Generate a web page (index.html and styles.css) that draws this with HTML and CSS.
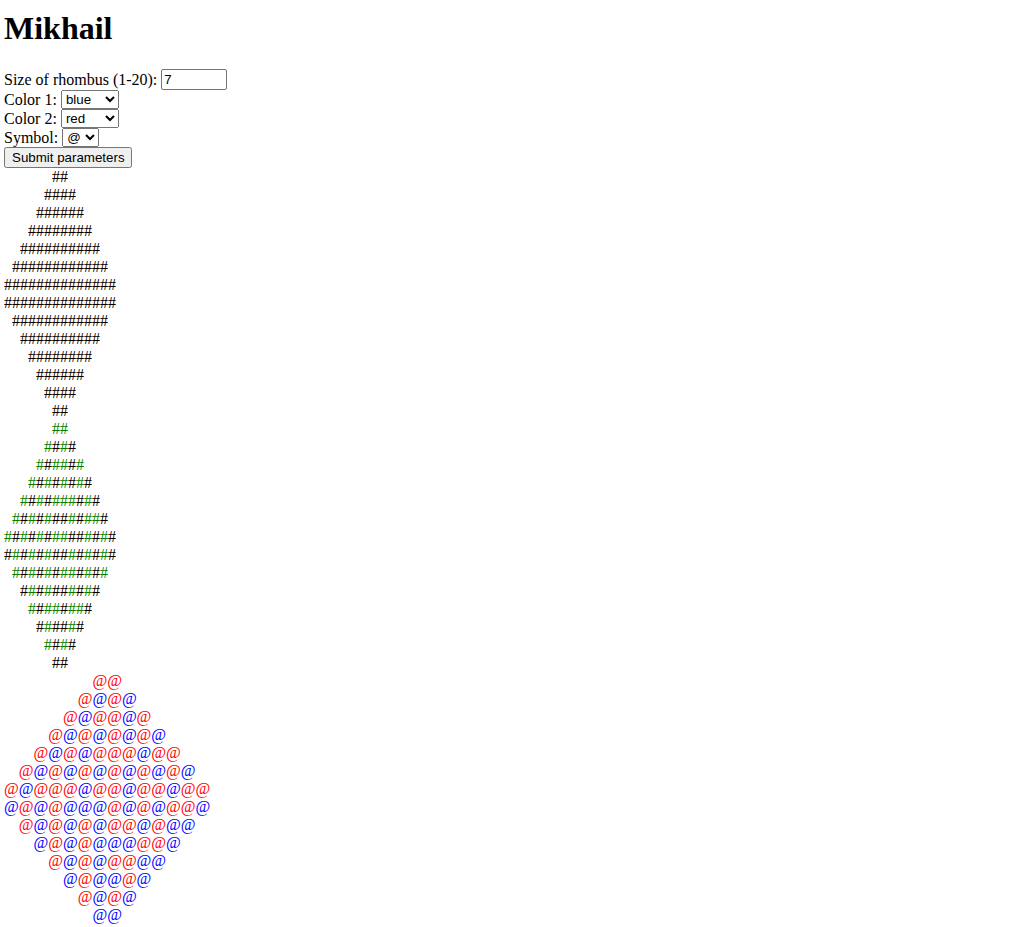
FILE: index.html
```html
<!DOCTYPE html>
<html lang="en">
<head>
<meta charset="utf-8">
<title>Mikhail</title>
<link rel="stylesheet" href="styles.css">
</head>
<body>
<h1 class="title">Mikhail</h1>
<form class="params">
  <div class="row row-tall">Size of rhombus (1-20):<input class="size" type="text" value="7"></div>
  <div class="row">Color 1:<select class="color"><option>blue</option><option>red</option><option>green</option><option>black</option></select></div>
  <div class="row">Color 2:<select class="color"><option>red</option><option>blue</option><option>green</option><option>black</option></select></div>
  <div class="row">Symbol:<select class="symbol"><option>@</option><option>#</option><option>*</option></select></div>
  <div class="row row-tall"><button class="submit" type="button">Submit parameters</button></div>
</form>

<div class="rhombus">
  <div class="line">##</div>
  <div class="line">####</div>
  <div class="line">######</div>
  <div class="line">########</div>
  <div class="line">##########</div>
  <div class="line">############</div>
  <div class="line">##############</div>
  <div class="line">##############</div>
  <div class="line">############</div>
  <div class="line">##########</div>
  <div class="line">########</div>
  <div class="line">######</div>
  <div class="line">####</div>
  <div class="line">##</div>
</div>

<div class="rhombus">
  <div class="line"><span class="g">##</span></div>
  <div class="line"><span class="g">#</span>#<span class="g">#</span>#</div>
  <div class="line"><span class="g">#</span>#<span class="g">##</span>#<span class="g">#</span></div>
  <div class="line"><span class="g">#</span>#<span class="g">#</span>#<span class="g">#</span>#<span class="g">#</span>#</div>
  <div class="line"><span class="g">#</span>#<span class="g">#</span>#<span class="g">###</span>#<span class="g">#</span>#</div>
  <div class="line"><span class="g">#</span>#<span class="g">#</span>#<span class="g">#</span>##<span class="g">#</span>#<span class="g">##</span>#</div>
  <div class="line"><span class="g">#</span>#<span class="g">#</span>#<span class="g">#</span>#<span class="g">##</span>##<span class="g">#</span>#<span class="g">#</span>#</div>
  <div class="line">#<span class="g">#</span>#<span class="g">#</span>#<span class="g">#</span>##<span class="g">#</span>#<span class="g">#</span>#<span class="g">#</span>#</div>
  <div class="line"><span class="g">#</span>#<span class="g">#</span>#<span class="g">#</span>#<span class="g">##</span>#<span class="g">#</span>#<span class="g">#</span></div>
  <div class="line">#<span class="g">#</span>#<span class="g">#</span>##<span class="g">#</span>#<span class="g">#</span>#</div>
  <div class="line"><span class="g">#</span>#<span class="g">##</span>#<span class="g">##</span>#</div>
  <div class="line">#<span class="g">#</span>##<span class="g">#</span>#</div>
  <div class="line"><span class="g">#</span>#<span class="g">#</span>#</div>
  <div class="line">##</div>
</div>

<div class="rhombus at">
  <div class="line">@@</div>
  <div class="line">@<span class="b">@</span>@<span class="b">@</span></div>
  <div class="line">@<span class="b">@</span>@@<span class="b">@</span>@</div>
  <div class="line">@<span class="b">@</span>@<span class="b">@</span>@<span class="b">@</span>@<span class="b">@</span></div>
  <div class="line">@<span class="b">@</span>@<span class="b">@</span>@@@<span class="b">@</span>@@</div>
  <div class="line">@<span class="b">@</span>@<span class="b">@</span>@<span class="b">@</span>@<span class="b">@</span>@<span class="b">@</span>@<span class="b">@</span></div>
  <div class="line">@<span class="b">@</span>@@@<span class="b">@</span>@@<span class="b">@</span>@@<span class="b">@</span>@@</div>
  <div class="line"><span class="b">@</span>@<span class="b">@</span>@<span class="b">@@@</span>@<span class="b">@</span>@<span class="b">@</span>@@<span class="b">@</span></div>
  <div class="line">@<span class="b">@</span>@<span class="b">@</span>@<span class="b">@</span>@@<span class="b">@</span>@<span class="b">@@</span></div>
  <div class="line"><span class="b">@</span>@<span class="b">@</span>@<span class="b">@@@</span>@@<span class="b">@</span></div>
  <div class="line">@<span class="b">@</span>@<span class="b">@</span>@@<span class="b">@@</span></div>
  <div class="line"><span class="b">@</span>@<span class="b">@@</span>@<span class="b">@</span></div>
  <div class="line">@<span class="b">@</span>@<span class="b">@</span></div>
  <div class="line"><span class="b">@@</span></div>
</div>
</body>
</html>
```

FILE: styles.css
```css
html {
  background: #ffffff;
}

body {
  margin: 0 4px;
  font-family: "Liberation Serif", "Times New Roman", serif;
  font-size: 16px;
  color: #000000;
}

.title {
  margin: 10px 0 22px;
  font-size: 32px;
  line-height: 37px;
  font-weight: bold;
}

.params {
  margin: 0;
}

.row {
  display: flex;
  align-items: center;
  gap: 4px;
  height: 19px;
  white-space: nowrap;
}

.row-tall {
  height: 21px;
}

.size,
.color,
.symbol,
.submit {
  font-family: "Liberation Sans", Arial, sans-serif;
  font-size: 13.333px;
  box-sizing: border-box;
  margin: 0;
}

.size {
  width: 66px;
  height: 21px;
  padding: 1px 2px;
  border: 1px solid #767676;
  border-radius: 2px;
  color: #000;
}

.color {
  width: 58px;
  height: 19px;
}

.symbol {
  width: 37px;
  height: 19px;
}

.submit {
  width: 128px;
  height: 21px;
  padding: 1px 6px;
}

.rhombus {
  display: flex;
  flex-direction: column;
  align-items: center;
  width: max-content;
  color: #000000;
}

.line {
  height: 18px;
  line-height: 18px;
  white-space: pre;
}

.g {
  color: #008000;
}

.at {
  color: #ff0000;
}

.b {
  color: #0000ff;
}
```
